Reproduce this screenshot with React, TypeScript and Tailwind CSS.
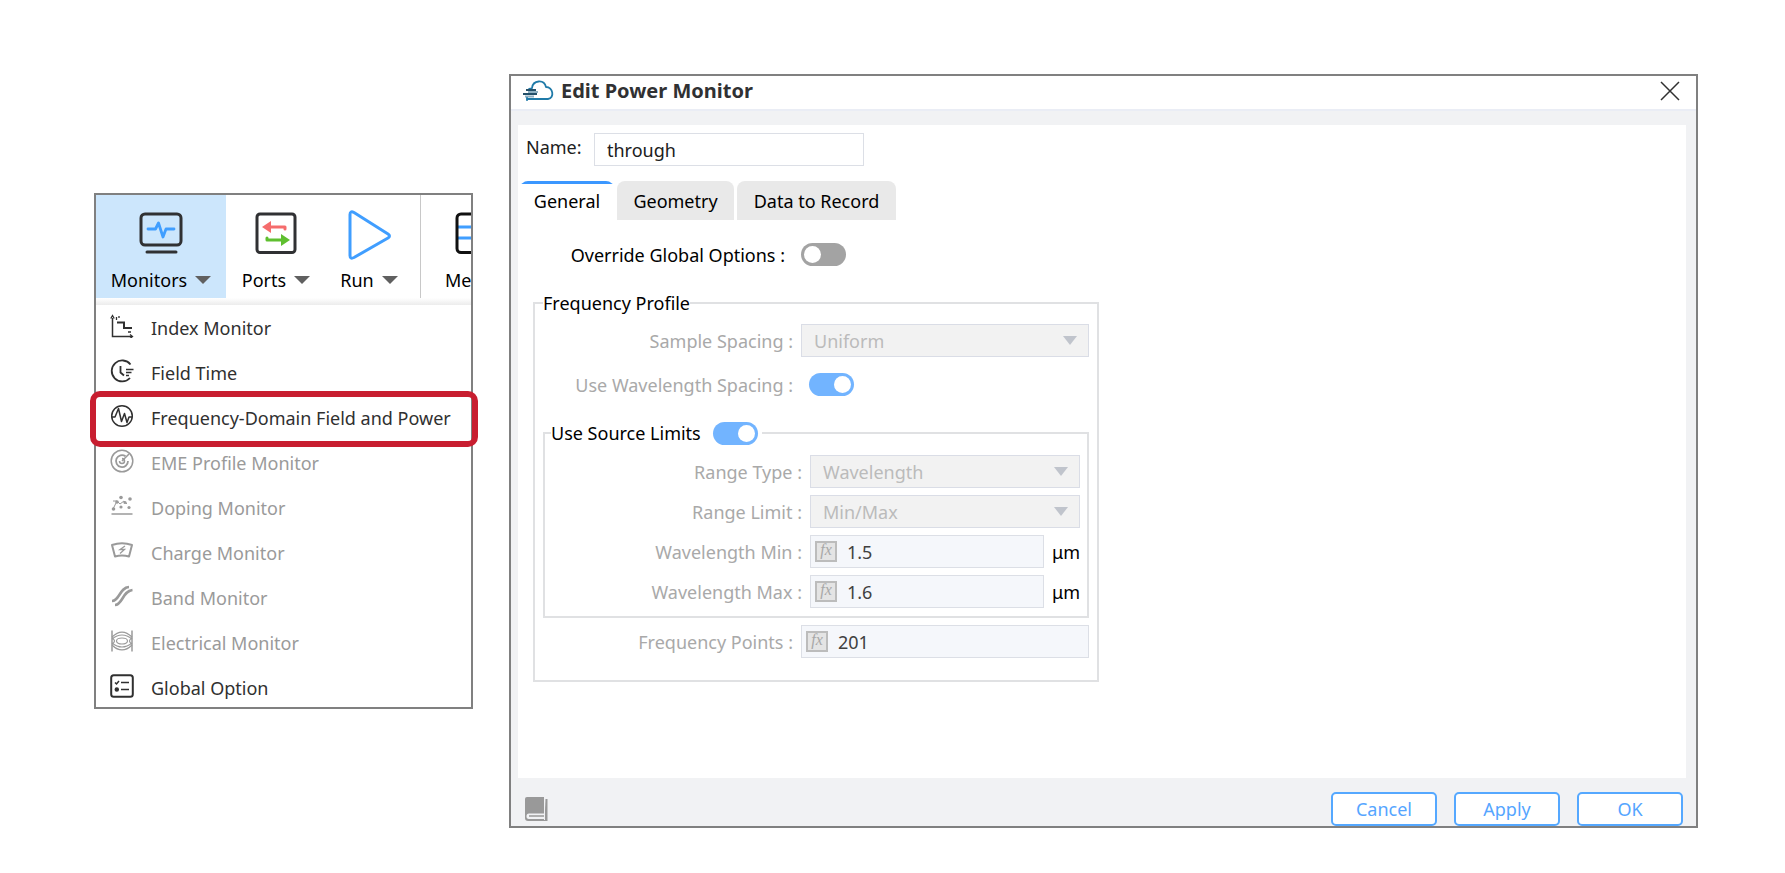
import type { InputHTMLAttributes, ReactNode } from "react";

function Caret({ className }: { className: string }) {
  return (
    <svg aria-hidden="true" viewBox="0 0 16 8" preserveAspectRatio="none" className={className}>
      <path d="M0 0h16L8 8z" fill="currentColor" />
    </svg>
  );
}

function MonitorsIcon() {
  return (
    <svg viewBox="0 0 48 48" className="h-12 w-12" fill="none" strokeLinecap="round">
      <rect x="4" y="4" width="40" height="31" rx="4" stroke="#303133" strokeWidth="3" />
      <path d="M10 42h29" stroke="#303133" strokeWidth="3" />
      <path d="M11 19h7.500l3-6 4.500 14 3-8h8" stroke="#409eff" strokeWidth="2.800" strokeLinejoin="round" />
    </svg>
  );
}

function PortsIcon() {
  return (
    <svg viewBox="0 0 48 48" className="h-12 w-12" fill="none">
      <rect x="5" y="4" width="38" height="38.500" rx="3" stroke="#303133" strokeWidth="3" />
      <path d="M18 17h15v2" stroke="#f56c6c" strokeWidth="3" strokeLinecap="round" strokeLinejoin="round" />
      <path d="M10 17l9-6v12z" fill="#f56c6c" />
      <path d="M15 28v2h15" stroke="#5fbf2f" strokeWidth="3" strokeLinecap="round" strokeLinejoin="round" />
      <path d="M38 30l-9-6v12z" fill="#5fbf2f" />
    </svg>
  );
}

function RunIcon() {
  return (
    <svg viewBox="0 0 48 52" className="h-[52px] w-12" fill="none">
      <path
        d="M5 5.500v41q0 4 4 2l34-19.500q3-2 0-4L9 3.500q-4-2-4 2z"
        stroke="#409eff"
        strokeWidth="3"
        strokeLinejoin="round"
      />
    </svg>
  );
}

function MessagesIcon() {
  return (
    <svg viewBox="0 0 48 48" className="h-12 w-12" fill="none">
      <path d="M4 17h40M4 28h40" stroke="#409eff" strokeWidth="3" />
      <rect x="4" y="4" width="40" height="38.500" rx="4" stroke="#111" strokeWidth="3" />
    </svg>
  );
}

const menuIcons: Record<string, ReactNode> = {
  index: (
    <>
      <path d="M2.500 4v18.500H22" />
      <path d="M7 8.500h7V14h8" strokeWidth="2" />
      <path d="M.8 4.500l1.700-3 1.700 3M20 20.500l2.500 2-2.500 2M6.500 3v3M9 2v2M18 18h3" strokeWidth="1.300" />
    </>
  ),
  time: (
    <>
      <path d="M20.500 5.500A10.500 10.500 0 1 0 20 19" strokeWidth="1.800" />
      <path d="M10.500 7v6.500l3.500 3" strokeWidth="1.800" />
      <path d="M16 10.500h7.500M16 13.500h5.500M16 16.500h3" strokeWidth="1.300" />
    </>
  ),
  frequency: (
    <>
      <circle cx="12" cy="12" r="10.300" />
      <path d="M2 13h3l3.500-8.500 3 13 3-8 2.500 9 2-5.500h3" strokeLinejoin="round" />
    </>
  ),
  eme: (
    <>
      <circle cx="12" cy="12" r="10.800" />
      <path d="M15.500 7.200A6 6 0 1 0 18 12" strokeWidth="1.800" />
      <path d="M12 12l7-7M9.500 12a2.500 2.500 0 1 0 2.500-2.500" />
    </>
  ),
  doping: (
    <>
      <path d="M1.500 20h21" />
      <path d="M3 7h4l3 3 4-3 3 3M7 7l-4 8" strokeWidth="1" />
      <g fill="currentColor" stroke="none">
        <circle cx="11" cy="3.500" r="1.800" />
        <circle cx="20" cy="5" r="1.800" />
        <circle cx="7" cy="8" r="1.800" />
        <circle cx="3.500" cy="15" r="1.800" />
        <circle cx="11" cy="13" r="1.600" />
        <circle cx="15" cy="8.500" r="1.600" />
        <circle cx="19" cy="13.500" r="1.600" />
      </g>
    </>
  ),
  charge: (
    <>
      <path d="M2 6q10-3.500 20 0l-3 11.500q-7-2-14 0z" strokeWidth="2" strokeLinejoin="round" />
      <path d="M15 7l-5 3.500h4.500L10 14.500" strokeWidth="1.300" />
    </>
  ),
  band: (
    <>
      <path d="M2 17c7.500 0 7.500-13.500 17-14" strokeWidth="2.600" />
      <path d="M5 21c7.500 0 7.500-14 17.500-15" strokeWidth="2.600" />
    </>
  ),
  electrical: (
    <>
      <path d="M2 1.500v21M22 1.500v21" />
      <ellipse cx="12" cy="12" rx="5.500" ry="3" strokeWidth="1.200" />
      <path
        d="M2 8q10-10 20 0M2 16q10 10 20 0M2 10q10-8 20 0M2 14q10 8 20 0M2 9q5 3 0 6M22 9q-5 3 0 6"
        strokeWidth="1.200"
      />
    </>
  ),
  global: (
    <>
      <rect x="1.200" y="1.200" width="21.600" height="21.600" rx="2.500" strokeWidth="2" />
      <path d="M5 8.500l1.500 1.500L9 7M11 8.500h8M11 15.500h8" />
      <circle cx="6.800" cy="15.500" r="1.500" fill="currentColor" />
    </>
  ),
};

const menuItems = [
  { icon: "index", label: "Index Monitor" },
  { icon: "time", label: "Field Time" },
  { icon: "frequency", label: "Frequency-Domain Field and Power", highlighted: true },
  { icon: "eme", label: "EME Profile Monitor", disabled: true },
  { icon: "doping", label: "Doping Monitor", disabled: true },
  { icon: "charge", label: "Charge Monitor", disabled: true },
  { icon: "band", label: "Band Monitor", disabled: true },
  { icon: "electrical", label: "Electrical Monitor", disabled: true },
  { icon: "global", label: "Global Option" },
];

function MonitorsMenu() {
  const tool = "flex shrink-0 flex-col items-center justify-between pt-[15px] pb-1.5";
  return (
    <section aria-label="Monitors menu" className="mt-[119px] w-[379px] shrink-0 border-2 border-[#808080] bg-white">
      <div className="flex h-[103px] overflow-hidden">
        <button type="button" className={`${tool} w-[130px] bg-[#cce6fc]`}>
          <MonitorsIcon />
          <span className="flex items-center gap-2">
            Monitors <Caret className="h-2 w-4 text-[#606060]" />
          </span>
        </button>
        <button type="button" className={`${tool} w-[100px]`}>
          <PortsIcon />
          <span className="flex items-center gap-2">
            Ports <Caret className="h-2 w-4 text-[#606060]" />
          </span>
        </button>
        <button type="button" className={`${tool} w-[94px] pr-2`}>
          <span className="-mt-px">
            <RunIcon />
          </span>
          <span className="flex items-center gap-2">
            Run <Caret className="h-2 w-4 text-[#606060]" />
          </span>
        </button>
        <button type="button" className={`${tool} w-[122px] border-l border-[#c8c8c8] pl-6`}>
          <span className="self-start pl-2">
            <MessagesIcon />
          </span>
          <span className="self-start">Me</span>
        </button>
      </div>
      <div className="h-[7px] bg-gradient-to-b from-white to-[#ececec]" />
      <ul>
        {menuItems.map((item) => (
          <li key={item.label} className="relative h-[45px] last:h-[42px]">
            <button
              type="button"
              disabled={item.disabled}
              className={`flex w-full items-start gap-[17px] pt-[9px] pl-3.5 text-left whitespace-nowrap ${
                item.disabled ? "text-[#9a9a9a]" : "text-[#303030]"
              }`}
            >
              <svg
                aria-hidden="true"
                viewBox="0 0 24 24"
                className="h-6 w-6 shrink-0"
                fill="none"
                stroke="currentColor"
                strokeWidth="1.500"
              >
                {menuIcons[item.icon]}
              </svg>
              <span className="pt-0.5">{item.label}</span>
            </button>
            {item.highlighted && (
              <span className="pointer-events-none absolute -top-1 -right-[7px] -bottom-[7px] -left-1.5 rounded-[10px] border-[6px] border-[#c81e30]" />
            )}
          </li>
        ))}
      </ul>
    </section>
  );
}

function Toggle({ className = "", ...props }: InputHTMLAttributes<HTMLInputElement>) {
  return (
    <input
      type="checkbox"
      role="switch"
      className={`flex h-[23px] w-[45px] shrink-0 appearance-none items-center rounded-full bg-[#a3a3a3] px-[3px] before:h-[17px] before:w-[17px] before:rounded-full before:bg-white checked:justify-end checked:bg-[#72b4ff] ${className}`}
      {...props}
    />
  );
}

function Row({ id, label, inner, children }: { id: string; label: string; inner?: boolean; children: ReactNode }) {
  return (
    <div className="flex h-[33px] items-center gap-2">
      <label htmlFor={id} className={`shrink-0 text-right text-[#a9a9a9] ${inner ? "w-[257px]" : "w-[250px]"}`}>
        {label} :
      </label>
      {children}
    </div>
  );
}

function SelectBox({ id, value }: { id: string; value: string }) {
  return (
    <span className="relative flex h-full min-w-0 flex-1">
      <select
        id={id}
        disabled
        className="h-full w-full appearance-none border border-[#dadde6] bg-[#f2f2f2] pl-3 text-[#bbbbbb] opacity-100"
      >
        <option>{value}</option>
      </select>
      <Caret className="absolute top-3 right-3 h-[9px] w-3.5 text-[#c0c4cc]" />
    </span>
  );
}

function ValueBox({ id, value }: { id: string; value: string }) {
  return (
    <span className="flex h-full min-w-0 flex-1 items-center gap-2.5 border border-[#dcdfe6] bg-[#f5f7fb] pl-1">
      <span className="flex h-[21px] w-[22px] shrink-0 items-center justify-center border-2 border-[#bcbcbc] bg-[#e4e4e4] pb-1 font-['Liberation_Serif',serif] text-base text-[#a8a8a8] italic">
        fx
      </span>
      <input
        id={id}
        readOnly
        defaultValue={value}
        className="h-full w-full min-w-0 flex-1 bg-transparent text-[#404040] outline-none"
      />
    </span>
  );
}

function Dialog() {
  const tab = "h-[39px] rounded-t-lg";
  const action = "h-[34px] w-[106px] rounded-[5px] border-2 border-[#55a8ff] bg-white text-[#55a5ff]";
  return (
    <section aria-labelledby="dialog-title" className="min-w-0 flex-1 border-2 border-[#808080] bg-[#f1f2f4]">
      <header className="flex h-[35px] items-center border-b-2 border-[#eaedf5] bg-white pr-4 pb-1 pl-[11px]">
        <svg aria-hidden="true" viewBox="0 0 32 22" className="h-[22px] w-8" fill="none">
          <path
            d="M7 9c2-1 3 0 3-1 1-8 12-9 14-1 7 0 9 11 2 12H5"
            stroke="#1f7aa8"
            strokeWidth="1.800"
            strokeLinecap="round"
            strokeLinejoin="round"
          />
          <path d="M4 10h10M1 14h14" stroke="#24506a" strokeWidth="2" />
          <path d="M6 12h10M3 16.500h9" stroke="#8fb0c2" strokeWidth="2" />
          <path d="M5 17v4" stroke="#1f7aa8" strokeWidth="1.500" />
        </svg>
        <h1 id="dialog-title" className="flex-1 pl-[7px] text-xl leading-6 font-bold text-[#303133]">
          Edit Power Monitor
        </h1>
        <button type="button" aria-label="Close">
          <svg viewBox="0 0 20 20" className="h-5 w-5" fill="none" stroke="#303030" strokeWidth="1.500">
            <path d="M1 1l18 18M19 1L1 19" />
          </svg>
        </button>
      </header>

      <div className="mt-3.5 mr-2.5 ml-[7px] min-h-[653px] bg-white pt-2">
        <div className="flex items-center gap-2 pl-2">
          <label htmlFor="name" className="w-[60px] pb-1.5 whitespace-nowrap text-[#202020]">
            Name:
          </label>
          <input
            id="name"
            defaultValue="through"
            className="h-[33px] w-[270px] border border-[#dcdfe6] pl-3 text-[#202020] outline-none"
          />
        </div>

        <div role="tablist" className="mt-[15px] flex gap-[3px] pl-0.5">
          <button
            type="button"
            role="tab"
            aria-selected="true"
            className="relative h-[39px] w-[94px] overflow-hidden rounded-t-lg"
          >
            <span className="absolute inset-x-0 top-0 h-[3px] bg-[#3b97ff]" />
            General
          </button>
          <button type="button" role="tab" aria-selected="false" className={`${tab} w-[117px] bg-[#e9e9e9]`}>
            Geometry
          </button>
          <button type="button" role="tab" aria-selected="false" className={`${tab} w-[159px] bg-[#e9e9e9]`}>
            Data to Record
          </button>
        </div>

        <div role="tabpanel" className="pt-[18px] pl-[15px]">
          <div className="flex h-[33px] items-center gap-4">
            <label htmlFor="override" className="w-[252px] text-right">
              Override Global Options :
            </label>
            <Toggle id="override" />
          </div>

          <fieldset className="mt-5 w-full max-w-[566px] min-w-0 border-2 border-[#e0e1e3] px-2 pb-[22px]">
            <legend className="leading-6">Frequency Profile</legend>
            <div className="pt-[9px]">
              <Row id="spacing" label="Sample Spacing">
                <SelectBox id="spacing" value="Uniform" />
              </Row>
            </div>
            <div className="pt-[11px]">
              <Row id="wavelength-spacing" label="Use Wavelength Spacing">
                <Toggle id="wavelength-spacing" defaultChecked disabled className="ml-2" />
              </Row>
            </div>

            <fieldset className="mt-5 mb-[7px] min-w-0 border-2 border-[#e0e1e3] pr-[7px] pb-2">
              <legend className="ml-1.5 flex h-6 items-center gap-3 pr-1">
                <label htmlFor="source-limits">Use Source Limits</label>
                <Toggle id="source-limits" defaultChecked />
              </legend>
              <div className="flex flex-col gap-[7px] pt-2.5">
                <Row inner id="range-type" label="Range Type">
                  <SelectBox id="range-type" value="Wavelength" />
                </Row>
                <Row inner id="range-limit" label="Range Limit">
                  <SelectBox id="range-limit" value="Min/Max" />
                </Row>
                <Row inner id="wavelength-min" label="Wavelength Min">
                  <ValueBox id="wavelength-min" value="1.5" />
                  <span className="w-7">μm</span>
                </Row>
                <Row inner id="wavelength-max" label="Wavelength Max">
                  <ValueBox id="wavelength-max" value="1.6" />
                  <span className="w-7">μm</span>
                </Row>
              </div>
            </fieldset>

            <Row id="frequency-points" label="Frequency Points">
              <ValueBox id="frequency-points" value="201" />
            </Row>
          </fieldset>
        </div>
      </div>

      <footer className="flex h-12 items-center justify-between pt-3.5 pr-[13px] pb-px pl-3">
        <button type="button" aria-label="Manual">
          <svg viewBox="0 0 26 26" className="h-[26px] w-[26px]">
            <path d="M4 1h18v24H5q-3 0-3-3V3q0-2 2-2z" fill="#999" />
            <path d="M22.500 3h2v22h-3" fill="#999" />
            <path d="M21 17.500H6q-2.500 0-2.500 2.800T6 23h15" fill="#f1f2f4" />
            <path d="M6 20h15" stroke="#999" strokeWidth="1.500" />
            <path d="M21.500 1v23" stroke="#f1f2f4" strokeWidth="1" />
          </svg>
        </button>
        <div className="flex gap-[17px]">
          <button type="button" className={action}>
            Cancel
          </button>
          <button type="button" className={action}>
            Apply
          </button>
          <button type="button" className={action}>
            OK
          </button>
        </div>
      </footer>
    </section>
  );
}

export default function App() {
  return (
    <main className="flex min-h-screen items-start gap-9 bg-white pt-[74px] pr-[87px] pb-11 pl-[94px] font-['Noto_Sans',sans-serif] text-lg leading-6 text-black">
      <MonitorsMenu />
      <Dialog />
    </main>
  );
}
